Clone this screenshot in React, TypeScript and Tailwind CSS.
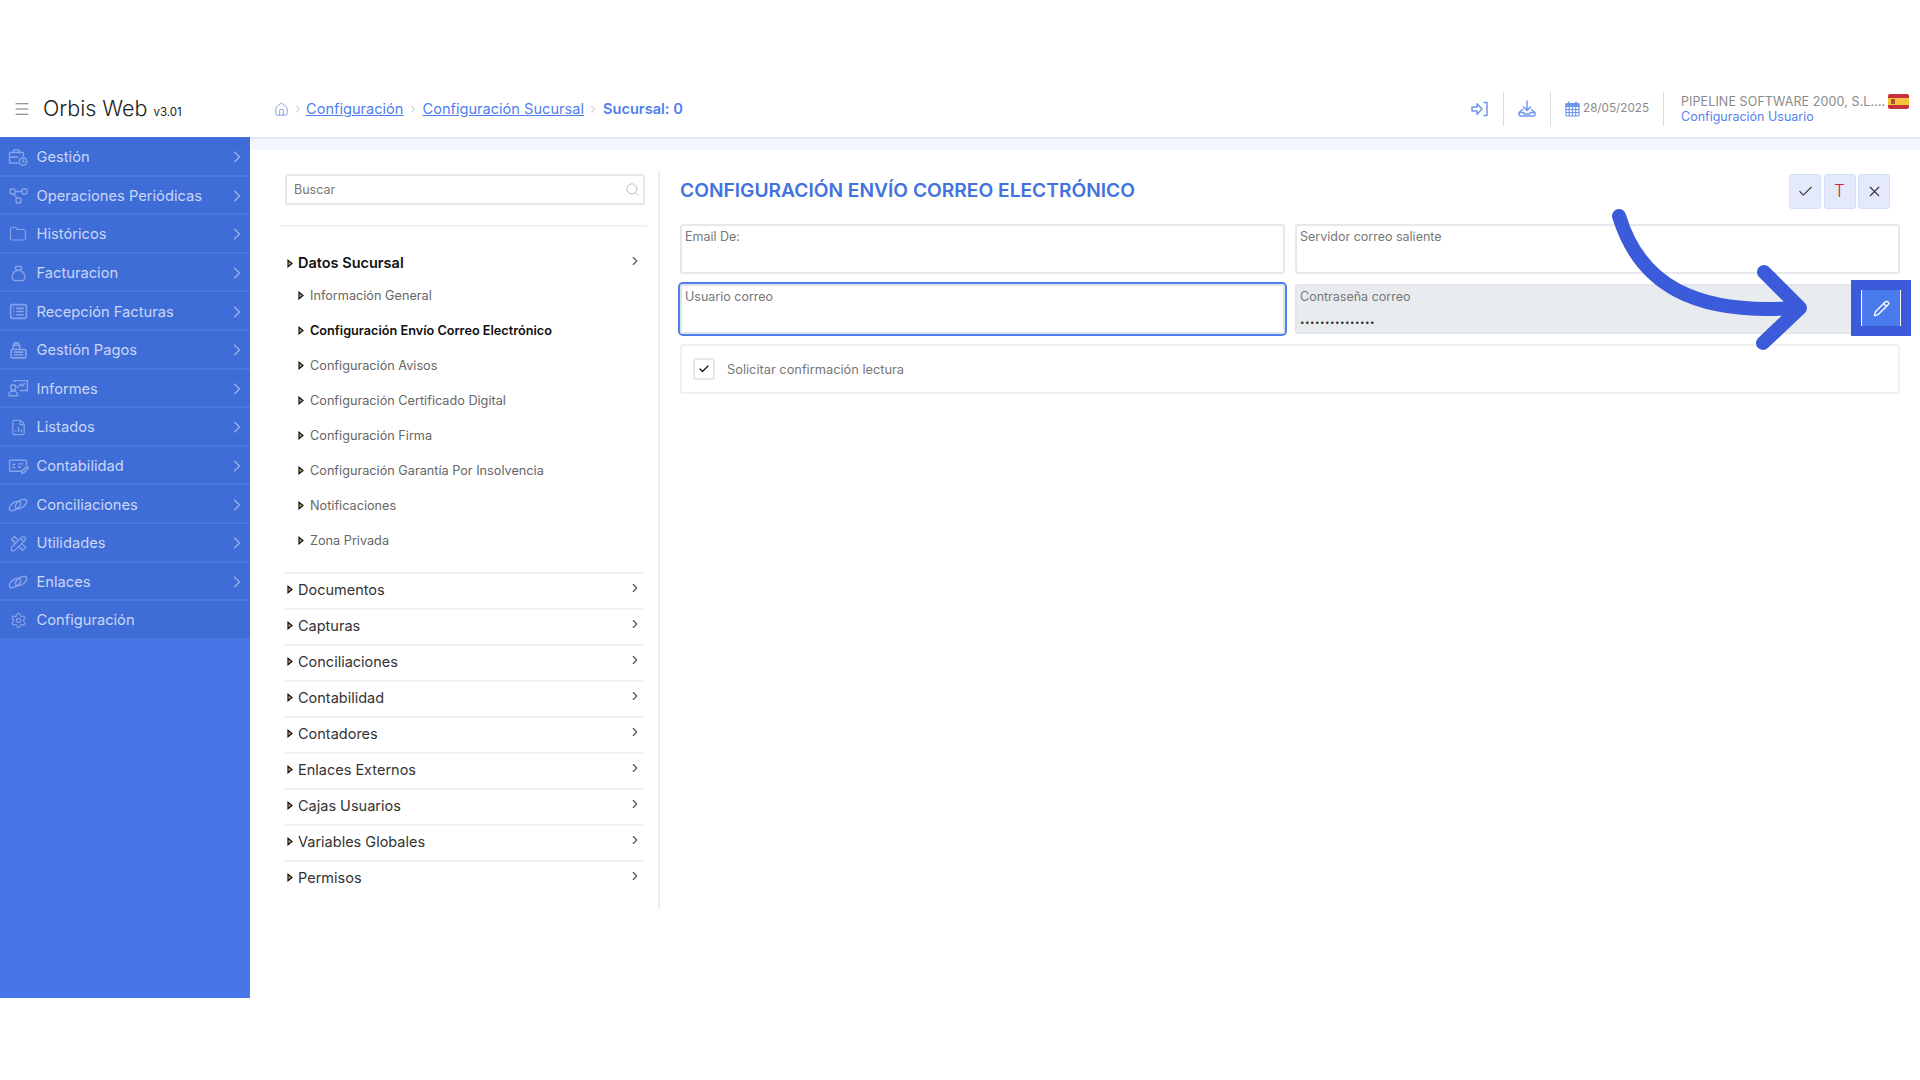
import { ReactNode } from "react";
import {
  Check,
  ChevronRight,
  FileChartColumn,
  Folder,
  House,
  Menu,
  Pencil,
  Search,
  Settings,
  X,
} from "lucide-react";
import { TbMoneybag, TbTools } from "react-icons/tb";

const font = "font-['Inter','Liberation_Sans',sans-serif]";

const BriefcaseClock = () => (
  <svg width="20" height="19" viewBox="0 0 20 18" fill="none" stroke="currentColor" strokeWidth="1.4">
    <path d="M10 14.500H2.500a1 1 0 0 1-1-1V5a1 1 0 0 1 1-1h12a1 1 0 0 1 1 1v3" />
    <path d="M5.500 4V2.500a1 1 0 0 1 1-1h4a1 1 0 0 1 1 1V4M1.500 8.500h9M5 7.500v2" />
    <circle cx="15" cy="13" r="3.800" />
    <path d="M15 11v2.200h1.800" />
  </svg>
);

const Nodes = () => (
  <svg width="19" height="18" viewBox="0 0 19 18" fill="none" stroke="currentColor" strokeWidth="1.4">
    <rect x="1" y="2" width="5" height="5" rx="1.500" />
    <rect x="13" y="2" width="5" height="5" rx="1.500" />
    <rect x="7" y="11" width="5" height="5" rx="1.500" />
    <path d="M6 4.500h7M4.500 7l3.500 4" />
  </svg>
);

const Chain = () => (
  <svg width="20" height="14" viewBox="0 0 20 14" fill="none" stroke="currentColor" strokeWidth="1.400">
    <ellipse cx="7" cy="8" rx="6.500" ry="3.500" transform="rotate(-35 7 8)" />
    <ellipse cx="13" cy="6" rx="6.500" ry="3.500" transform="rotate(-35 13 6)" />
  </svg>
);

const CashRegister = () => (
  <svg width="19" height="19" viewBox="0 0 18 18" fill="none" stroke="currentColor" strokeWidth="1.5">
    <rect x="2" y="8" width="14" height="8" rx="1" />
    <path d="M4 8V4h6v4M5 2h4v2H5zM4.5 10.5h9M4.5 13h9" />
  </svg>
);

const Presentation = () => (
  <svg width="21" height="19" viewBox="0 0 20 18" fill="none" stroke="currentColor" strokeWidth="1.4">
    <path d="M6 3V1.5h12.5V11H11" />
    <path d="M9 8l3-3 2 1.5 2-3" />
    <circle cx="5" cy="8" r="2.5" />
    <path d="M1 16v-1.500c0-2 1.500-3 4-3s4 1 4 3V16z" />
  </svg>
);

const Cheque = () => (
  <svg width="21" height="19" viewBox="0 0 20 18" fill="none" stroke="currentColor" strokeWidth="1.4">
    <path d="M13 13.500H2.500a1 1 0 0 1-1-1V4a1 1 0 0 1 1-1h14a1 1 0 0 1 1 1v4" />
    <path d="M4 7h3M4 10h3M9.500 6.500h5M9.500 9.500h3" />
    <path d="M13 15.500l.5-2.500 4.500-4 1.500 1.500-4.500 4.500z" />
  </svg>
);

const Invoices = () => (
  <svg width="19" height="19" viewBox="0 0 18 18" fill="none" stroke="currentColor" strokeWidth="1.5">
    <rect x="1.500" y="2.500" width="15" height="13" rx="2" />
    <path d="M4 6h1M4 9h1M4 12h1M7 6h7M7 9h7M7 12h7" />
  </svg>
);

const CalendarGrid = () => (
  <svg width="15" height="16" viewBox="0 0 15 16" fill="none" stroke="currentColor" strokeWidth="1.200" className="ml-[14px]">
    <rect x="1" y="2.500" width="13" height="12.500" rx="1" />
    <path d="M1 5.500h13M1 8.500h13M1 11.500h13M4.300 5.500V15M7.500 5.500V15M10.700 5.500V15" />
    <path d="M4 .5v3M11 .5v3" strokeWidth="1.600" />
    <path d="M1 3h13v2.500H1z" fill="currentColor" />
  </svg>
);

const sidebarItems: { label: string; icon: ReactNode; arrow?: boolean }[] = [
  { label: "Gestión", icon: <BriefcaseClock /> },
  { label: "Operaciones Periódicas", icon: <Nodes /> },
  { label: "Históricos", icon: <Folder size={18} strokeWidth={1.6} /> },
  { label: "Facturacion", icon: <TbMoneybag size={19} strokeWidth={1.6} /> },
  { label: "Recepción Facturas", icon: <Invoices /> },
  { label: "Gestión Pagos", icon: <CashRegister /> },
  { label: "Informes", icon: <Presentation /> },
  { label: "Listados", icon: <FileChartColumn size={17} strokeWidth={1.7} /> },
  { label: "Contabilidad", icon: <Cheque /> },
  { label: "Conciliaciones", icon: <Chain /> },
  { label: "Utilidades", icon: <TbTools size={19} strokeWidth={1.6} /> },
  { label: "Enlaces", icon: <Chain /> },
  { label: "Configuración", icon: <Settings size={17} strokeWidth={1.6} />, arrow: false },
];

const subItems = [
  "Información General",
  "Configuración Envío Correo Electrónico",
  "Configuración Avisos",
  "Configuración Certificado Digital",
  "Configuración Firma",
  "Configuración Garantía Por Insolvencia",
  "Notificaciones",
  "Zona Privada",
];

const groups = [
  "Documentos",
  "Capturas",
  "Conciliaciones",
  "Contabilidad",
  "Contadores",
  "Enlaces Externos",
  "Cajas Usuarios",
  "Variables Globales",
  "Permisos",
];

const Tri = () => (
  <svg width="6" height="9" viewBox="0 0 6 9" className="shrink-0">
    <path d="M1 1.200l4 3.300-4 3.300z" fill="#c9a070" stroke="#111" strokeWidth="1.200" />
  </svg>
);

const Field = ({ label, className = "", children }: { label: string; className?: string; children?: ReactNode }) => (
  <div className={`h-[50px] rounded-[3px] border-2 px-[3px] pt-[2px] text-[12.5px] text-[#777] ${className}`}>
    <div>{label}</div>
    {children}
  </div>
);

const ActionButton = ({ children }: { children: ReactNode }) => (
  <div className="flex h-[35px] w-[32px] items-center justify-center rounded-[3px] border border-[#d4dff8] bg-[#e4eafb]">
    {children}
  </div>
);

export default function App() {
  return (
    <div className={`relative h-[1080px] w-full overflow-hidden bg-white pt-[80px] ${font}`}>
      <header className="flex h-[57px] items-center">
        <Menu size={18} strokeWidth={1.4} className="ml-[13px] text-[#777]" />
        <div className="ml-[12px] w-[231px] font-light text-[21.500px] text-[#222]">
          Orbis Web <span className="text-[11.500px] font-normal">v3.01</span>
        </div>
        <nav className="flex items-center pt-[2px] text-[14.600px] text-[#4f7fec]">
          <House size={15} strokeWidth={1.3} className="text-[#6b8fe8]" />
          <ChevronRight size={12} className="mx-[2.500px] text-[#bbb]" />
          <a className="underline">Configuración</a>
          <ChevronRight size={12} className="mx-[3.500px] text-[#bbb]" />
          <a className="underline">Configuración Sucursal</a>
          <ChevronRight size={12} className="mx-[3.500px] text-[#bbb]" />
          <b className="font-semibold">Sucursal: 0</b>
        </nav>
        <div className="ml-auto flex h-[34px] items-center text-[#6f96ee]">
          <svg width="18" height="16" viewBox="0 0 18 16" fill="none" stroke="currentColor" strokeWidth="1.500" strokeLinejoin="round" className="mr-[14px]">
            <path d="M12.500 1.500h3.500v13h-3.500M1 6h5V2.800L11 8l-5 5.200V10H1z" />
          </svg>
          <div className="h-[34px] w-px bg-[#ddd]" />
          <svg width="18" height="17" viewBox="0 0 18 17" fill="none" stroke="currentColor" strokeWidth="1.500" strokeLinecap="round" strokeLinejoin="round" className="mx-[14px]">
            <path d="M9 1v9.500M5.500 7L9 10.500 12.500 7M4.500 9.500L1 12.500v2a1.500 1.500 0 0 0 1.500 1.500h13a1.500 1.500 0 0 0 1.500-1.500v-2L13.500 9.500M1 12.500h4.500l1 1.500h5l1-1.500H17" />
          </svg>
          <div className="h-[34px] w-px bg-[#ddd]" />
          <CalendarGrid />
          <span className="ml-[3px] mr-[14px] text-[11.700px] text-[#8a8a8a]">28/05/2025</span>
          <div className="h-[34px] w-px bg-[#ddd]" />
          <div className="ml-[17px] w-[207px] text-[12.500px]">
            <div className="truncate pt-[1px] leading-[14px] tracking-[0.1px] text-[#8a8a8a]">PIPELINE SOFTWARE 2000, S.L....</div>
            <div className="leading-[15px] text-[#5583ee]">Configuración Usuario</div>
          </div>
          <div className="mb-[15px] mr-[11px] flex h-[15px] w-[21px] flex-col overflow-hidden rounded-[2px]">
            <div className="h-[4px] bg-[#c9303e]" />
            <div className="h-[7px] bg-[#f6c33c] pl-[3px]">
              <div className="mt-[1px] h-[5px] w-[4px] bg-[#b5533a]" />
            </div>
            <div className="h-[4px] bg-[#c9303e]" />
          </div>
        </div>
      </header>

      <div className="flex h-[861px]">
        <aside className="w-[250px] shrink-0 bg-[#4676e8] pt-[1px]">
          {sidebarItems.map((item) => (
            <div
              key={item.label}
              className="flex h-[38.600px] items-center border-b-2 border-[#4a78e0] bg-[#3f6dd8] pt-[2px] text-[14.700px] text-[#c9d6f6]"
            >
              <span className="flex w-[36.500px] justify-center text-[#86a3e8]">{item.icon}</span>
              <span>{item.label}</span>
              {item.arrow !== false && (
                <ChevronRight size={20} strokeWidth={1.400} className="ml-auto mr-[3px] text-[#9db5ee]" />
              )}
            </div>
          ))}
        </aside>

        <div className="min-w-0 flex-1">
          <div className="h-[13px] border-t-2 border-[#dfe8fc] bg-[#f3f6fe]" />
          <div className="flex pt-[20px]">
            <section className="h-[740px] w-[410px] shrink-0 border-r-2 border-[#eee] pl-[30px] pr-[11px] pt-[4px]">
              <div className="ml-[5px] flex h-[31px] w-[360px] items-center justify-between rounded-[3px] border-2 border-[#e6e8ec] pl-[7px] pr-[3px] text-[12.500px] text-[#777]">
                <span className="pt-[2px]">Buscar</span>
                <Search size={15} strokeWidth={1.200} className="text-[#aaa]" />
              </div>
              <div className="mt-[20px] h-[2px] bg-[#f2f2f2]" />
              <div className="mx-[3px] pt-[24px]">
                <div className="flex h-[24px] items-center text-[14.500px] font-semibold text-[#111]">
                  <span className="ml-[4px] mr-[5px]"><Tri /></span>
                  Datos Sucursal
                  <ChevronRight size={14} className="mb-[4px] ml-auto mr-[2px] text-[#555]" />
                </div>
                <div className="pb-[14px] pt-[3px]">
                  {subItems.map((s, i) => (
                    <div
                      key={s}
                      className={`flex h-[35px] items-center pl-[15px] text-[12.700px] ${i === 1 ? "font-semibold text-[#111]" : "text-[#666]"}`}
                    >
                      <span className="mr-[6px]"><Tri /></span>
                      {s}
                    </div>
                  ))}
                </div>
                {groups.map((g) => (
                  <div
                    key={g}
                    className="flex h-[36px] items-center border-t-2 border-[#f2f2f2] pb-[3px] text-[14.500px] text-[#333]"
                  >
                    <span className="ml-[4px] mr-[5px]"><Tri /></span>
                    {g}
                    <ChevronRight size={14} className="mb-[4px] ml-auto mr-[2px] text-[#555]" />
                  </div>
                ))}
              </div>
            </section>

            <main className="min-w-0 flex-1 pl-[20px] pr-[20px] pt-[4px]">
              <div className="flex h-[35px] items-center justify-between">
                <h1 className="pb-[3px] text-[19.200px] font-semibold text-[#4272de]">CONFIGURACIÓN ENVÍO CORREO ELECTRÓNICO</h1>
                <div className="mr-[10px] flex gap-[2.500px]">
                  <ActionButton>
                    <Check size={17} strokeWidth={1.500} className="text-[#333]" />
                  </ActionButton>
                  <ActionButton>
                    <span className="text-[17px] font-light text-[#d8223f]">T</span>
                  </ActionButton>
                  <ActionButton>
                    <X size={17} strokeWidth={1.500} className="text-[#333]" />
                  </ActionButton>
                </div>
              </div>
              <div className="mt-[15px] grid grid-cols-2 gap-[10px]">
                <Field label="Email De:" className="border-[#e6e8ec]" />
                <Field label="Servidor correo saliente" className="border-[#e6e8ec]" />
                <Field
                  label="Usuario correo"
                  className="border-[#dfe3ea] shadow-[0_0_0_2px_#4f7fec]"
                />
                <Field label="Contraseña correo" className="border-[#e2e5e9] bg-[#e9ecef]">
                  <div className="mt-[11px] text-[8px] leading-[8px] tracking-[0.5px] text-[#333]">•••••••••••••••</div>
                </Field>
                <div className="col-span-2 flex h-[50px] items-center rounded-[3px] border-2 border-[#eef0f2] pl-[11px] text-[12.800px] text-[#777]">
                  <span className="flex h-[22px] w-[22px] items-center justify-center rounded-[3px] border-2 border-[#e6e8ec]">
                    <Check size={12} strokeWidth={2.500} className="text-[#111]" />
                  </span>
                  <span className="ml-[12px] pt-[2px]">Solicitar confirmación lectura</span>
                </div>
              </div>
            </main>
          </div>
        </div>
      </div>

      {/* anotacion del tutorial encima de la pantalla */}
      <svg className="absolute left-[1600px] top-[200px]" width="220" height="160" viewBox="1600 200 220 160" fill="none" stroke="#3b5bdb" strokeWidth="14" strokeLinecap="round" strokeLinejoin="round">
        <path d="M1619 216C1640 285 1695 315 1795 308M1764 272L1800 308L1763 343" />
      </svg>
      <div className="absolute left-[1851px] top-[280px] flex h-[56px] w-[60px] items-center justify-center bg-[#3b5bdb]">
        <div className="flex h-[36px] w-[40px] items-center justify-center border-x border-white bg-[#4a7bec]">
          <Pencil size={17} strokeWidth={1.900} className="text-white" />
        </div>
      </div>
    </div>
  );
}
